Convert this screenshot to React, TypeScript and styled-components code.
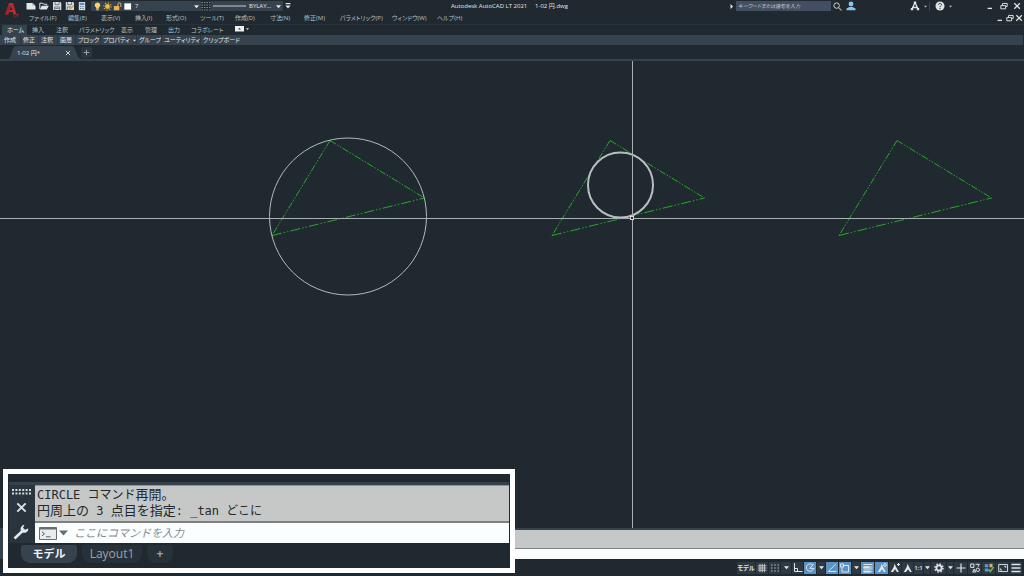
import React from "react";
import styled, { createGlobalStyle } from "styled-components";

const color = {
  ground: "#1f292f",
  panel: "#36424e",
  rail: "#29343d",
  line: "#35414b",
  text: "#b9c1c6",
  bright: "#e4e8ea",
  blue: "#5b93c6",
  green: "#28a82a",
  grey: "#c5c8c7",
};

const Global = createGlobalStyle`
  * { box-sizing: border-box; }
  body { margin: 0; background: ${color.ground}; }
  button, input, select {
    font: inherit; color: inherit; background: none; border: 0; padding: 0; margin: 0;
    appearance: none; outline: none; border-radius: 0;
  }
  svg { display: block; flex: none; }
`;

const Page = styled.div`
  position: relative;
  display: flex;
  flex-direction: column;
  min-height: 100vh;
  overflow: hidden;
  background: ${color.ground};
  color: ${color.text};
  font: 6px/10px "Open Sans", "Noto Sans CJK JP", sans-serif;
  font-feature-settings: "palt";
  white-space: nowrap;
`;

const Header = styled.header`
  display: grid;
  grid-template-columns: 25px minmax(0, 1fr);
  grid-template-rows: 12px 12px;
  border-bottom: 1px solid #28323b;
`;

const Brand = styled.button`
  grid-row: 1 / 3;
  display: flex;
  padding: 2px 0 0 4px;
`;

const TitleRow = styled.div`
  display: flex;
  align-items: center;
`;

const IconButton = styled.button<{ $w: number }>`
  display: flex;
  flex: none;
  align-items: center;
  justify-content: center;
  width: ${(p) => p.$w}px;
  height: 12px;
`;

const Combo = styled.label<{ $w: number }>`
  display: flex;
  align-items: center;
  flex: none;
  width: ${(p) => p.$w}px;
  height: 10px;
  padding: 0 2px;
  gap: 1px;
  background: ${color.panel};
  color: ${color.bright};
`;

const ComboSelect = styled.select`
  flex: 1;
  min-width: 0;
  height: 10px;
  line-height: 10px;
  padding: 0 0 0 2px;
`;

const Title = styled.h1`
  flex: 1;
  margin: 0;
  font-size: 6px;
  font-weight: 400;
  text-align: center;
  color: ${color.bright};
  white-space: pre;
`;

const Search = styled.input`
  flex: none;
  width: 95px;
  height: 10px;
  padding: 0 2px;
  background: #434f60;
  font-size: 5px;
  font-style: italic;
  &::placeholder { color: #c3cad1; opacity: 1; }
`;

const Divider = styled.span`
  width: 1px;
  height: 9px;
  background: #39444d;
`;

const MenuRow = styled.nav`
  display: flex;
  align-items: center;
  padding-left: 4px;
`;

const MenuItem = styled.button<{ $w: number }>`
  flex: none;
  width: ${(p) => p.$w}px;
  text-align: left;
`;

const Spacer = styled.span<{ $w?: number }>`
  flex: ${(p) => (p.$w ? `0 0 ${p.$w}px` : "1")};
`;

const RibbonTabs = styled.nav`
  display: flex;
  align-items: flex-end;
  height: 10px;
  padding-left: 2px;
`;

const RibbonTab = styled.button<{ $w: number; $on?: boolean }>`
  flex: none;
  width: ${(p) => p.$w}px;
  height: 10px;
  padding-left: 5px;
  text-align: left;
  background: ${(p) => (p.$on ? color.panel : "none")};
  color: ${(p) => (p.$on ? color.bright : color.text)};
`;

const PanelBar = styled.div`
  display: flex;
  height: 10px;
  margin-right: 1px;
  padding-left: 1px;
  background: ${color.panel};
`;

const PanelButton = styled.button<{ $w: number }>`
  display: flex;
  flex: none;
  align-items: center;
  gap: 3px;
  width: ${(p) => p.$w}px;
  padding-left: 2px;
  color: ${color.bright};
  border-left: 1px solid #2c3741;
  &:first-child { border-left-color: transparent; }
`;

const DocTabs = styled.div`
  display: flex;
  align-items: flex-end;
  height: 16px;
  padding-left: 8px;
  border-bottom: 2px solid ${color.line};
`;

const DocTab = styled.div`
  display: grid;
  width: 73px;
  height: 13px;
  > * { grid-area: 1 / 1; }
`;

const DocTabText = styled.div`
  display: flex;
  align-items: center;
  justify-content: space-between;
  padding: 0 7px 0 9px;
  color: ${color.bright};
`;

const AddTab = styled.button`
  display: flex;
  align-items: center;
  justify-content: center;
  width: 11px;
  height: 11px;
  margin-bottom: 1px;
  border-radius: 2px;
  background: #2b363f;
`;

const Canvas = styled.main`
  flex: 1;
  display: flex;
  min-height: 467px;
  svg { flex: 1; width: 100%; height: auto; }
`;

const Dock = styled.div`
  height: 31px;
  border-top: 2px solid ${color.line};
  border-left: 12px solid ${color.line};
  background: ${color.grey};
  display: flex;
  flex-direction: column;
  justify-content: flex-end;
`;

const DockInput = styled.input`
  width: 100%;
  height: 11px;
  background: #fbfefe;
  border-top: 1px solid #7d8485;
`;

const StatusBar = styled.footer`
  display: flex;
  justify-content: flex-end;
  align-items: center;
  height: 17px;
  padding-right: 1px;
`;

const StatusItem = styled.button<{ $w: number; $on?: boolean }>`
  display: flex;
  flex: none;
  align-items: center;
  justify-content: center;
  width: ${(p) => p.$w}px;
  height: 12px;
  background: ${(p) => (p.$on ? color.blue : "#2e3943")};
  color: ${color.bright};
  font-weight: 600;
  border: solid ${color.ground};
  border-width: 0 1px 0 0;
`;

const Magnified = styled.section`
  position: absolute;
  left: 3px;
  bottom: 3px;
  width: 50%;
  height: 104px;
  border: 5px solid #fff;
  background: ${color.ground};
  padding: 8px 1px 0 1px;
`;

const CommandBox = styled.div`
  display: grid;
  grid-template-columns: 26px minmax(0, 1fr);
  border-top: 3px solid ${color.line};
  background: ${color.rail};
`;

const Rail = styled.div`
  display: flex;
  flex-direction: column;
  align-items: center;
  justify-content: space-between;
  padding: 4px 2px 3px 0;
`;

const RailButton = styled.button`
  display: flex;
  &:last-child { margin-top: 4px; }
`;

const History = styled.div`
  height: 38px;
  padding: 1px 2px 0;
  background: ${color.grey};
  border-top: 1px solid #8c9496;
  border-bottom: 2px solid #7b8182;
  color: #23282b;
  font: 12px/16px "DejaVu Sans Mono", "Noto Sans CJK JP", monospace;
  white-space: pre;
`;

const HistoryLine = styled.div`
  display: flex;
  align-items: center;
  height: 16px;
`;

const Kanji = styled.span`
  font-size: 13px;
`;

const Prompt = styled.label`
  display: flex;
  align-items: center;
  height: 20px;
  padding-left: 4px;
  gap: 2px;
  background: #fbfefe;
`;

const PromptInput = styled.input`
  flex: 1;
  min-width: 0;
  height: 18px;
  padding: 0 0 2px 4px;
  color: #333;
  font: italic 11px/16px "Noto Sans CJK JP", sans-serif;
  &::placeholder { color: #84898b; opacity: 1; }
`;

const LayoutTabs = styled.div`
  display: flex;
  padding: 2px 0 0 12px;
`;

const LayoutTab = styled.button<{ $w: number; $on?: boolean }>`
  width: ${(p) => p.$w}px;
  height: 18px;
  margin-right: 5px;
  border-radius: 2px 2px 9px 9px;
  background: ${(p) => (p.$on ? color.panel : "#26313a")};
  color: ${(p) => (p.$on ? "#f0f3f4" : "#9ba4aa")};
  font: ${(p) => (p.$on ? "700 11px" : "400 12px")}/18px "Open Sans", "Noto Sans CJK JP", sans-serif;
`;

const Caret = ({ size = 5 }: { size?: number }) => (
  <svg width={size} height={size} viewBox="0 0 6 6" aria-hidden="true">
    <path d="M0 1.5h6L3 5z" fill="currentColor" />
  </svg>
);

const Glyph = ({ children, s = 10 }: { children: React.ReactNode; s?: number }) => (
  <svg
    width={s}
    height={s}
    viewBox="0 0 10 10"
    fill="none"
    stroke="#dfe4e6"
    strokeWidth="1"
    aria-hidden="true"
  >
    {children}
  </svg>
);

const NewFile = (
  <Glyph>
    <path d="M.5 2h5.7L9.500 5v3.500h-9z" fill="#e3e6e8" stroke="none" />
    <path d="M6.400 1.800 9.400 4.600H6.400z" fill="#aab1b6" stroke="none" />
  </Glyph>
);
const OpenFile = (
  <Glyph>
    <path d="M.8 8V2.200h3l.8 1h3.200v1.300" />
    <path d="M.8 8.600 2.800 4.800H9.800L7.800 8.600z" fill="#e3e6e8" stroke="none" />
  </Glyph>
);
const Save = (
  <Glyph>
    <path d="M1 1h7.200L9.300 2v7H1z" fill="#d9dde0" stroke="none" />
    <path d="M3 1v2.700h4V1M2.600 9V6h5v3M3.300 7.500h3.400" stroke="#55606a" strokeWidth=".8" />
  </Glyph>
);
const SaveAs = (
  <Glyph>
    <path d="M.8 1h7.400L9 2v7H.8z" fill="#d9dde0" stroke="none" />
    <path d="M2.600 1v2.700h4V1M2.400 9V6H6" stroke="#55606a" strokeWidth=".8" />
    <path d="M4.300 8.800 8.800 4.400" stroke="#d8a05a" strokeWidth="1.600" />
  </Glyph>
);
const Calc = (
  <Glyph>
    <path d="M1.800 1h6.400v8.200H1.800z" fill="#d5dce1" stroke="none" />
    <path d="M2.700 2h4.600v2H2.700z" fill="#4f8fc2" stroke="none" />
    <path d="M3 5.500h4M3 7.500h4" stroke="#6c7780" strokeDasharray="1 .6" />
  </Glyph>
);

const quick: [string, React.ReactNode, number][] = [
  ["新規作成", NewFile, 12],
  ["開く", OpenFile, 13],
  ["上書き保存", Save, 13],
  ["名前を付けて保存", SaveAs, 13],
  ["計算機", Calc, 12],
];

const menus: [string, number][] = [
  ["ファイル(F)", 39],
  ["編集(E)", 33],
  ["表示(V)", 34],
  ["挿入(I)", 31],
  ["形式(O)", 34],
  ["ツール(T)", 35],
  ["作成(D)", 35],
  ["寸法(N)", 34],
  ["修正(M)", 36],
  ["パラメトリック(P)", 52],
  ["ウィンドウ(W)", 45],
  ["ヘルプ(H)", 30],
];

const ribbon: [string, number][] = [
  ["ホーム", 25],
  ["挿入", 24],
  ["注釈", 23],
  ["パラメトリック", 42],
  ["表示", 24],
  ["管理", 23],
  ["出力", 23],
  ["コラボレート", 47],
];

const panels: [string, number][] = [
  ["作成", 19],
  ["修正", 18],
  ["注釈", 19],
  ["画層", 18],
  ["ブロック", 25],
  ["プロパティ", 36],
  ["グループ", 25],
  ["ユーティリティ", 39],
  ["クリップボード", 44],
];

const WindowControls = ({ widths, name }: { widths: [number, number, number]; name: string }) => (
  <>
    <IconButton $w={widths[0]} aria-label={`${name}を最小化`}>
      <Glyph s={8}>
        <path d="M2 8h5.500" strokeWidth="1.600" />
      </Glyph>
    </IconButton>
    <IconButton $w={widths[1]} aria-label={`${name}を元に戻す`}>
      <Glyph s={8}>
        <path d="M1 4.500h6v4H1zM3.200 4V1.800H9v3.800H7.400" strokeWidth="1.200" />
      </Glyph>
    </IconButton>
    <IconButton $w={widths[2]} aria-label={`${name}を閉じる`}>
      <Glyph s={8}>
        <path d="m1.600 1.500 7 7m0-7-7 7" strokeWidth="1.600" />
      </Glyph>
    </IconButton>
  </>
);

const Person = ({ mark }: { mark?: React.ReactNode }) => (
  <Glyph>
    <path d="M4.600.8 5.600 3 8.800 9H7L5 6.300 3 9H.8L3.700 4z" fill="#e3e7e9" stroke="none" />
    {mark}
  </Glyph>
);

const status: { name: string; w: number; on?: boolean; icon: React.ReactNode }[] = [
  { name: "モデル空間", w: 19, icon: "モデル" },
  {
    name: "グリッド",
    w: 13,
    icon: (
      <Glyph>
        <path d="M3 .8v8.400M5.200.8v8.400M7.400.8v8.400M.8 2.800h8.600M.8 5h8.600M.8 7.200h8.600" strokeWidth=".8" />
      </Glyph>
    ),
  },
  {
    name: "スナップ",
    w: 12,
    icon: (
      <Glyph>
        <path d="M1.200 2h8M1.200 5h8M1.200 8h8" strokeDasharray="1.200 2" strokeWidth="1.200" />
      </Glyph>
    ),
  },
  { name: "スナップ設定", w: 11, icon: <Caret /> },
  {
    name: "直交モード",
    w: 12,
    icon: (
      <Glyph>
        <path d="M1.500 0v8.500h8M1.500 5.500h3v3" />
      </Glyph>
    ),
  },
  {
    name: "極トラッキング",
    w: 13,
    on: true,
    icon: (
      <Glyph>
        <path d="M8 2.300A3.700 3.700 0 1 0 8.500 6M4.800 5.400h4.600M4.800 5.400 8.600 1" />
      </Glyph>
    ),
  },
  { name: "極設定", w: 9, icon: <Caret /> },
  {
    name: "オブジェクトスナップトラッキング",
    w: 13,
    on: true,
    icon: (
      <Glyph>
        <path d="M8.800 1 1.300 8.500h8" />
      </Glyph>
    ),
  },
  {
    name: "オブジェクトスナップ",
    w: 13,
    on: true,
    icon: (
      <Glyph>
        <path d="M2 2.500h6.500V9H2z" />
        <path d="M.5 1h3v3h-3z" fill={color.blue} />
      </Glyph>
    ),
  },
  { name: "スナップの種類", w: 9, icon: <Caret /> },
  {
    name: "線の太さ",
    w: 14,
    on: true,
    icon: (
      <Glyph>
        <path d="M.5 1.500h9M.5 4h9M.5 6h9M.5 8.700h9" />
        <path d="M.5 4.200h6M.5 8.400h7" strokeWidth="2" />
      </Glyph>
    ),
  },
  {
    name: "注釈オブジェクトを表示",
    w: 14,
    on: true,
    icon: <Person mark={<circle cx="8" cy="2" r="1.400" />} />,
  },
  { name: "尺度を自動追加", w: 13, icon: <Person mark={<path d="M7 1.500h3M8.500 0v3" />} /> },
  { name: "注釈", w: 12, icon: <Person /> },
  { name: "1:1", w: 10, icon: "1:1" },
  { name: "注釈尺度", w: 7, icon: <Caret /> },
  {
    name: "ワークスペース",
    w: 16,
    icon: (
      <Glyph>
        <circle cx="5" cy="5" r="2.600" strokeWidth="1.800" />
        <circle cx="5" cy="5" r="4" strokeWidth="1.500" strokeDasharray="1.600 1.540" />
      </Glyph>
    ),
  },
  { name: "ワークスペース設定", w: 7, icon: <Caret /> },
  {
    name: "注釈モニター",
    w: 14,
    icon: (
      <Glyph>
        <path d="M5 .5v9M.5 5h9" strokeWidth="1.200" />
      </Glyph>
    ),
  },
  {
    name: "選択表示",
    w: 14,
    icon: (
      <Glyph>
        <path d="M.7 1h3.200v3.400H.7zM5.500 1.300h3.800L8 3.800M2.700 9l1.500-3 1.500 3z" />
        <circle cx="7.800" cy="6.800" r="1.700" />
      </Glyph>
    ),
  },
  {
    name: "ハードウェアアクセラレーション",
    w: 14,
    icon: (
      <Glyph>
        <path d="M.8 1.300h3.500v3H.8zM.8 5.600h3.500v3H.8z" fill="#559fd9" stroke="none" />
        <path d="M5.500.8h3v3.500h-3z" fill="#d9b455" stroke="none" />
        <path d="m4.500 6.400 1.800 2L9.600 4" stroke="#58b86b" strokeWidth="1.600" />
      </Glyph>
    ),
  },
  {
    name: "フルスクリーン表示",
    w: 14,
    icon: (
      <Glyph>
        <path d="M.7 1.500h8.800v7H.7zM6 3.300h1.800V5M2.300 5.300V7h1.800" strokeWidth=".9" />
      </Glyph>
    ),
  },
  {
    name: "カスタマイズ",
    w: 13,
    icon: (
      <Glyph>
        <path d="M.5 1.500h9M.5 5h9M.5 8.500h9" strokeWidth="1.300" />
      </Glyph>
    ),
  },
];

const Triangle = ({ x }: { x: number }) => (
  <g transform={`translate(${x} 79.5)`} stroke={color.green}>
    <path d="M58 0 0 95" strokeDasharray="7 1.500 1.500 1.500 1.500 1.500" />
    <path d="m58 0 94.500 57.500" strokeDasharray="7 1.500 1.500 1.500 1.500 1.500" />
    <path d="m0 95 152.500-37.500" strokeDasharray="10 2 1.500 2 1.500 2" />
  </g>
);

export default function App() {
  return (
    <Page lang="ja">
      <Global />
      <Header>
        <Brand aria-label="アプリケーションメニュー">
          <svg width="16" height="17" viewBox="0 0 16 17" aria-hidden="true">
            <path d="M5 1h4l3.500 11.500H9.400L8.800 10H5L4.200 12.500H1.200z" fill="#bf2a2f" />
            <path d="M7 4 5.600 8h2.700z" fill={color.ground} />
            <path d="M1.200 12.500 5 1 7 4 4.200 12.500z" fill="#a3212a" />
            <path d="M10 12.500v2.500h1.700M12 12.600h3M13.500 12.600V15.300" stroke="#9a252b" fill="none" />
          </svg>
        </Brand>
        <TitleRow>
          {quick.map(([name, icon, w]) => (
            <IconButton key={name} $w={w} aria-label={name}>
              {icon}
            </IconButton>
          ))}
          <Spacer $w={3} />
          <Combo $w={110}>
            <Glyph s={9}>
              <path d="M5 .6a3 3 0 0 0-1.600 5.600V7.500h3.200V6.200A3 3 0 0 0 5 .6z" fill="#f6cf69" stroke="none" />
              <path d="M3.600 8.700h2.800" />
            </Glyph>
            <Glyph s={9}>
              <circle cx="5" cy="5" r="2.700" fill="#f5b942" stroke="none" />
              <circle cx="5" cy="5" r="4" stroke="#f5b942" strokeDasharray="1 2.140" strokeWidth="1.500" />
            </Glyph>
            <Glyph s={9}>
              <path d="M1 4.500h6v4.700H1z" fill="#edb54c" stroke="none" />
              <path d="M5.500 4.500V2.500a1.500 1.500 0 0 1 3.200 0v3" stroke="#edc679" />
            </Glyph>
            <Glyph s={9}>
              <path d="M1.500 1.500h7.500v7H1.500z" fill="#fff" stroke="none" />
            </Glyph>
            <ComboSelect aria-label="画層" defaultValue="7">
              <option>7</option>
            </ComboSelect>
            <Caret />
          </Combo>
          <IconButton $w={10} aria-label="線種">
            <Glyph>
              <path d="M.5 1.500h9M.5 4h9M.5 6.500h9M.5 9h9" stroke="#7d8990" strokeDasharray="1.500 1" />
            </Glyph>
          </IconButton>
          <Combo $w={72}>
            <svg width="33" height="2" viewBox="0 0 33 2" aria-hidden="true">
              <path d="M0 1h33" stroke="#c8cfd3" />
            </svg>
            <ComboSelect aria-label="線種の選択" defaultValue="BYLAY...">
              <option>BYLAY...</option>
            </ComboSelect>
            <Caret />
          </Combo>
          <IconButton $w={9} aria-label="クイックアクセスのカスタマイズ">
            <Glyph s={6}>
              <path d="M1 1h8" strokeWidth="2" />
              <path d="M.5 4h9L5 9z" fill="#dfe4e6" stroke="none" />
            </Glyph>
          </IconButton>
          <Title>{"Autodesk AutoCAD LT 2021     1-02 円.dwg"}</Title>
          <IconButton $w={9} aria-label="検索を折りたたむ">
            <Glyph s={5}>
              <path d="M3 0v10l5-5z" fill="#dfe4e6" stroke="none" />
            </Glyph>
          </IconButton>
          <Search aria-label="検索" placeholder="キーワードまたは語句を入力" />
          <IconButton $w={13} aria-label="検索を実行">
            <Glyph s={9}>
              <circle cx="4" cy="4" r="3" />
              <path d="m6.200 6.200 3.300 3.300" stroke="#b79a83" strokeWidth="1.400" />
            </Glyph>
          </IconButton>
          <IconButton $w={13} aria-label="サインイン">
            <Glyph>
              <circle cx="5" cy="3" r="2.400" fill="#86c5f0" stroke="none" />
              <path d="M.5 9.300V7.500L3.500 6h3l3 1.500v1.800z" fill="#86c5f0" stroke="none" />
            </Glyph>
          </IconButton>
          <Spacer $w={51} />
          <IconButton $w={14} aria-label="Autodesk App Store">
            <Glyph>
              <path d="M5 1.500 8 8M5 1.500 2 8M2 6.500h6" strokeWidth="1.300" />
              <path d="M3.800.5h2.400v2.500H3.800zM.8 7h2.400v2.200H.8zM6.800 7h2.400v2.200H6.800z" fill="#dfe4e6" stroke="none" />
            </Glyph>
          </IconButton>
          <IconButton $w={7} aria-label="ストアメニュー">
            <Caret size={3} />
          </IconButton>
          <Divider />
          <IconButton $w={19} aria-label="ヘルプ">
            <Glyph>
              <circle cx="5" cy="5" r="4.500" fill="#dfe4e6" stroke="none" />
              <path d="M3.500 3.800c0-2 3-1.800 3-.2C6.500 5 5 4.800 5 6.200M5 7v1.200" stroke="#39444d" />
            </Glyph>
          </IconButton>
          <IconButton $w={3} aria-label="ヘルプメニュー">
            <Caret size={3} />
          </IconButton>
          <Spacer $w={31} />
          <WindowControls name="アプリケーション" widths={[14, 13, 14]} />
        </TitleRow>
        <MenuRow>
          {menus.map(([label, w]) => (
            <MenuItem key={label} $w={w}>
              {label}
            </MenuItem>
          ))}
          <Spacer />
          <WindowControls name="図面" widths={[11, 9, 10]} />
        </MenuRow>
      </Header>

      <RibbonTabs>
        {ribbon.map(([label, w], i) => (
          <RibbonTab key={label} $w={w} $on={i === 0}>
            {label}
          </RibbonTab>
        ))}
        <IconButton $w={18} aria-label="リボンの最小化">
          <svg width="14" height="6" viewBox="0 0 14 6" aria-hidden="true">
            <path d="M0 0h9v5.500H0z" fill="#eef1f2" />
            <path d="M3 3.500h3L4.500 1.800z" fill="#39444d" />
            <path d="M11 2.300h3L12.500 4z" fill="#dfe4e6" />
          </svg>
        </IconButton>
      </RibbonTabs>
      <PanelBar>
        {panels.map(([label, w]) => (
          <PanelButton key={label} $w={w}>
            {label}
            {label === "プロパティ" && <Caret size={3} />}
          </PanelButton>
        ))}
      </PanelBar>
      <DocTabs>
        <DocTab>
          <svg width="73" height="13" viewBox="0 0 73 13" aria-hidden="true">
            <path d="M0 13C4 12 3 1 8 0h56c5 1 4 12 9 13z" fill={color.panel} />
          </svg>
          <DocTabText>
            <span>1-02 円*</span>
            <IconButton $w={12} aria-label="図面を閉じる">
              <Glyph s={6}>
                <path d="m1.500 1.500 7 7m0-7-7 7" strokeWidth="1.500" />
              </Glyph>
            </IconButton>
          </DocTabText>
        </DocTab>
        <AddTab aria-label="新しい図面">
          <Glyph s={7}>
            <path d="M5 1v8M1 5h8" strokeWidth="1.500" stroke="#98a2a8" />
          </Glyph>
        </AddTab>
      </DocTabs>

      <Canvas>
        <svg fill="none" role="img" aria-label="三角形と円の図面">
          <Triangle x={272} />
          <Triangle x={552} />
          <Triangle x={839} />
          <circle cx="348" cy="155.500" r="78.500" stroke="#b4babd" />
          <circle cx="620.500" cy="124" r="32.500" stroke="#b9bdbf" strokeWidth="2" />
          <path d="M0 157.500h4000" stroke="#a9b0b3" />
          <path d="M632.500 0v467" stroke="#a9b0b3" />
          <rect x="630.500" y="155.500" width="3" height="3" fill={color.ground} stroke="#d5d9db" />
        </svg>
      </Canvas>

      <Dock>
        <DockInput aria-label="コマンドライン" />
      </Dock>
      <StatusBar>
        {status.map((s) => (
          <StatusItem key={s.name} $w={s.w} $on={s.on} aria-label={s.name}>
            {s.icon}
          </StatusItem>
        ))}
      </StatusBar>

      <Magnified aria-label="コマンドウィンドウ">
        <CommandBox>
          <Rail>
            <svg width="19" height="6" viewBox="0 0 19 6" aria-hidden="true">
              <path d="M0 1h19M0 4.500h19" stroke="#d6dbde" strokeWidth="2" strokeDasharray="2 1.400" />
            </svg>
            <RailButton aria-label="コマンドウィンドウを閉じる">
              <Glyph s={11}>
                <path d="m1.200 1.200 7.600 7.600m0-7.600L1.200 8.800" strokeWidth="1.700" />
              </Glyph>
            </RailButton>
            <RailButton aria-label="コマンド設定">
              <svg width="16" height="16" viewBox="0 0 16 16" aria-hidden="true">
                <path d="M1.500 14.500 9.500 7" stroke="#e4e8ea" strokeWidth="2.600" />
                <path
                  d="M11.500.8 10 3.800l2 2 3.200-1.300c.6 2.500-2.200 5-5 4.200C7.500 8 7 5 8.200 3 9 1.600 10.300.9 11.500.8z"
                  fill="#e4e8ea"
                />
              </svg>
            </RailButton>
          </Rail>
          <div>
            <History>
              <HistoryLine>
                {"CIRCLE コマンド"}
                <Kanji>再開。</Kanji>
              </HistoryLine>
              <HistoryLine>
                <Kanji>円周上の</Kanji>
                {" 3 "}
                <Kanji>点目を指定</Kanji>
                {": _tan どこに"}
              </HistoryLine>
            </History>
            <Prompt>
              <svg width="18" height="13" viewBox="0 0 18 13" aria-hidden="true">
                <path d="M.5.500h17v12H.5z" fill="#e9eced" stroke="#676e72" />
                <path d="M.5 1.500h17" stroke="#676e72" strokeWidth="2" />
                <path d="m3 4.800 2.500 2L3 8.800M7 9.800h4.500" fill="none" stroke="#545b5f" />
              </svg>
              <svg width="9" height="6" viewBox="0 0 9 6" aria-hidden="true">
                <path d="M0 .5h9L4.500 5.500z" fill="#666d71" />
              </svg>
              <PromptInput aria-label="コマンド" placeholder="ここにコマンドを入力" />
            </Prompt>
          </div>
        </CommandBox>
        <LayoutTabs>
          <LayoutTab $w={56} $on>
            モデル
          </LayoutTab>
          <LayoutTab $w={60}>Layout1</LayoutTab>
          <LayoutTab $w={26} aria-label="新しいレイアウト">
            <b>+</b>
          </LayoutTab>
        </LayoutTabs>
      </Magnified>
    </Page>
  );
}
